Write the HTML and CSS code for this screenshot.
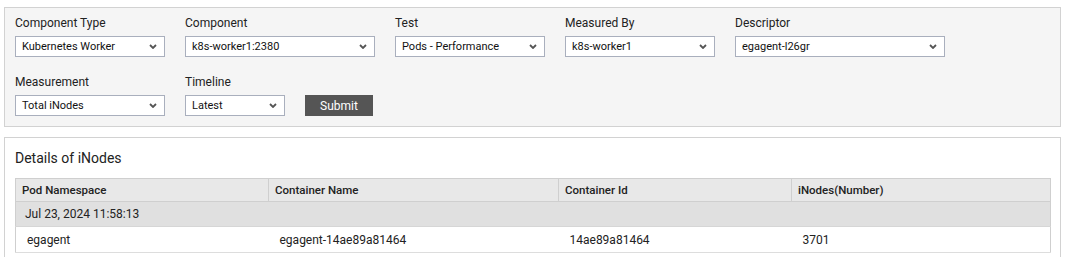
FILE: index.html
```html
<!DOCTYPE html>
<html lang="en">
  <head>
    <meta charset="UTF-8" />
    <meta name="viewport" content="width=device-width, initial-scale=1.0" />
    <title>iNodes Details</title>
    <link rel="stylesheet" href="styles.css">
  </head>
  <body>
    <div class="filter-panel">
      <div class="filter-row">
        <div class="field">
          <label>Component Type</label>
          <div class="select w150"><span>Kubernetes Worker</span><svg class="chev" width="8" height="5" viewBox="0 0 8 5"><path d="M1 1 L4 4 L7 1" /></svg></div>
        </div>
        <div class="field">
          <label>Component</label>
          <div class="select w190"><span>k8s-worker1:2380</span><svg class="chev" width="8" height="5" viewBox="0 0 8 5"><path d="M1 1 L4 4 L7 1" /></svg></div>
        </div>
        <div class="field">
          <label>Test</label>
          <div class="select w150"><span>Pods - Performance</span><svg class="chev" width="8" height="5" viewBox="0 0 8 5"><path d="M1 1 L4 4 L7 1" /></svg></div>
        </div>
        <div class="field">
          <label>Measured By</label>
          <div class="select w150"><span>k8s-worker1</span><svg class="chev" width="8" height="5" viewBox="0 0 8 5"><path d="M1 1 L4 4 L7 1" /></svg></div>
        </div>
        <div class="field">
          <label>Descriptor</label>
          <div class="select w210"><span>egagent-l26gr</span><svg class="chev" width="8" height="5" viewBox="0 0 8 5"><path d="M1 1 L4 4 L7 1" /></svg></div>
        </div>
      </div>
      <div class="filter-row second">
        <div class="field">
          <label>Measurement</label>
          <div class="select w150"><span>Total iNodes</span><svg class="chev" width="8" height="5" viewBox="0 0 8 5"><path d="M1 1 L4 4 L7 1" /></svg></div>
        </div>
        <div class="field">
          <label>Timeline</label>
          <div class="select w100"><span>Latest</span><svg class="chev" width="8" height="5" viewBox="0 0 8 5"><path d="M1 1 L4 4 L7 1" /></svg></div>
        </div>
        <div class="field">
          <button type="button" class="btn">Submit</button>
        </div>
      </div>
    </div>

    <div class="details-panel">
      <div class="details-title">Details of iNodes</div>
      <table class="details-table">
        <colgroup>
          <col class="c1" />
          <col class="c2" />
          <col class="c3" />
          <col class="c4" />
        </colgroup>
        <thead>
          <tr>
            <th>Pod Namespace</th>
            <th>Container Name</th>
            <th>Container Id</th>
            <th>iNodes(Number)</th>
          </tr>
        </thead>
        <tbody>
          <tr class="group-row">
            <td colspan="4">Jul 23, 2024 11:58:13</td>
          </tr>
          <tr class="data-row">
            <td>egagent</td>
            <td>egagent-14ae89a81464</td>
            <td>14ae89a81464</td>
            <td>3701</td>
          </tr>
        </tbody>
      </table>
    </div>
  </body>
</html>
```

FILE: styles.css
```css
body {
  margin: 7px 4px;
  font-family: Roboto, "Liberation Sans", Arial, sans-serif;
  color: #222;
}
.filter-panel {
  background-color: #f5f5f5;
  border: 1px solid #d2d2d2;
  padding: 7px 10px 10px;
}
.filter-row {
  display: flex;
  align-items: flex-end;
  gap: 20px;
}
.filter-row.second {
  margin-top: 17px;
}
.field {
  display: flex;
  flex-direction: column;
}
.field label {
  font-size: 12px;
  line-height: 16px;
  margin-bottom: 5px;
}
.select {
  box-sizing: border-box;
  height: 21px;
  display: flex;
  align-items: center;
  justify-content: space-between;
  background-color: #fff;
  border: 1px solid #a9afbd;
  padding: 0 6px 0 6px;
  font-size: 11px;
  color: #111;
}
.chev {
  margin-right: 1px;
}
.chev path {
  fill: none;
  stroke: #555;
  stroke-width: 1.8;
}
.w100 { width: 100px; }
.w150 { width: 150px; }
.w190 { width: 190px; }
.w210 { width: 210px; }
.btn {
  box-sizing: border-box;
  width: 68px;
  height: 21px;
  background-color: #555;
  color: #fff;
  border: none;
  font-family: inherit;
  font-size: 12px;
  padding: 0;
  cursor: pointer;
}
.details-panel {
  margin-top: 10px;
  background-color: #fff;
  border: 1px solid #d2d2d2;
  padding: 11px 10px 20px;
}
.details-title {
  font-size: 14px;
  line-height: 18px;
  margin-bottom: 11px;
}
.details-table {
  width: 1035px;
  border-collapse: collapse;
  table-layout: fixed;
  border: 1px solid #cfcfcf;
  font-size: 12px;
}
.c1 { width: 253px; }
.c2 { width: 290px; }
.c3 { width: 233px; }
.c4 { width: 259px; }
.details-table th {
  background-color: #e8e8e8;
  border: 1px solid #cfcfcf;
  text-align: left;
  font-size: 11.5px;
  font-weight: 500;
  height: 22px;
  padding: 0 6px;
}
.group-row td {
  background-color: #e0e0e0;
  height: 24px;
  padding: 0 9px;
  border-bottom: 1px solid #d6d6d6;
}
.data-row td {
  height: 25px;
  padding: 0 11px;
  border-bottom: 1px solid #ddd;
}
```
